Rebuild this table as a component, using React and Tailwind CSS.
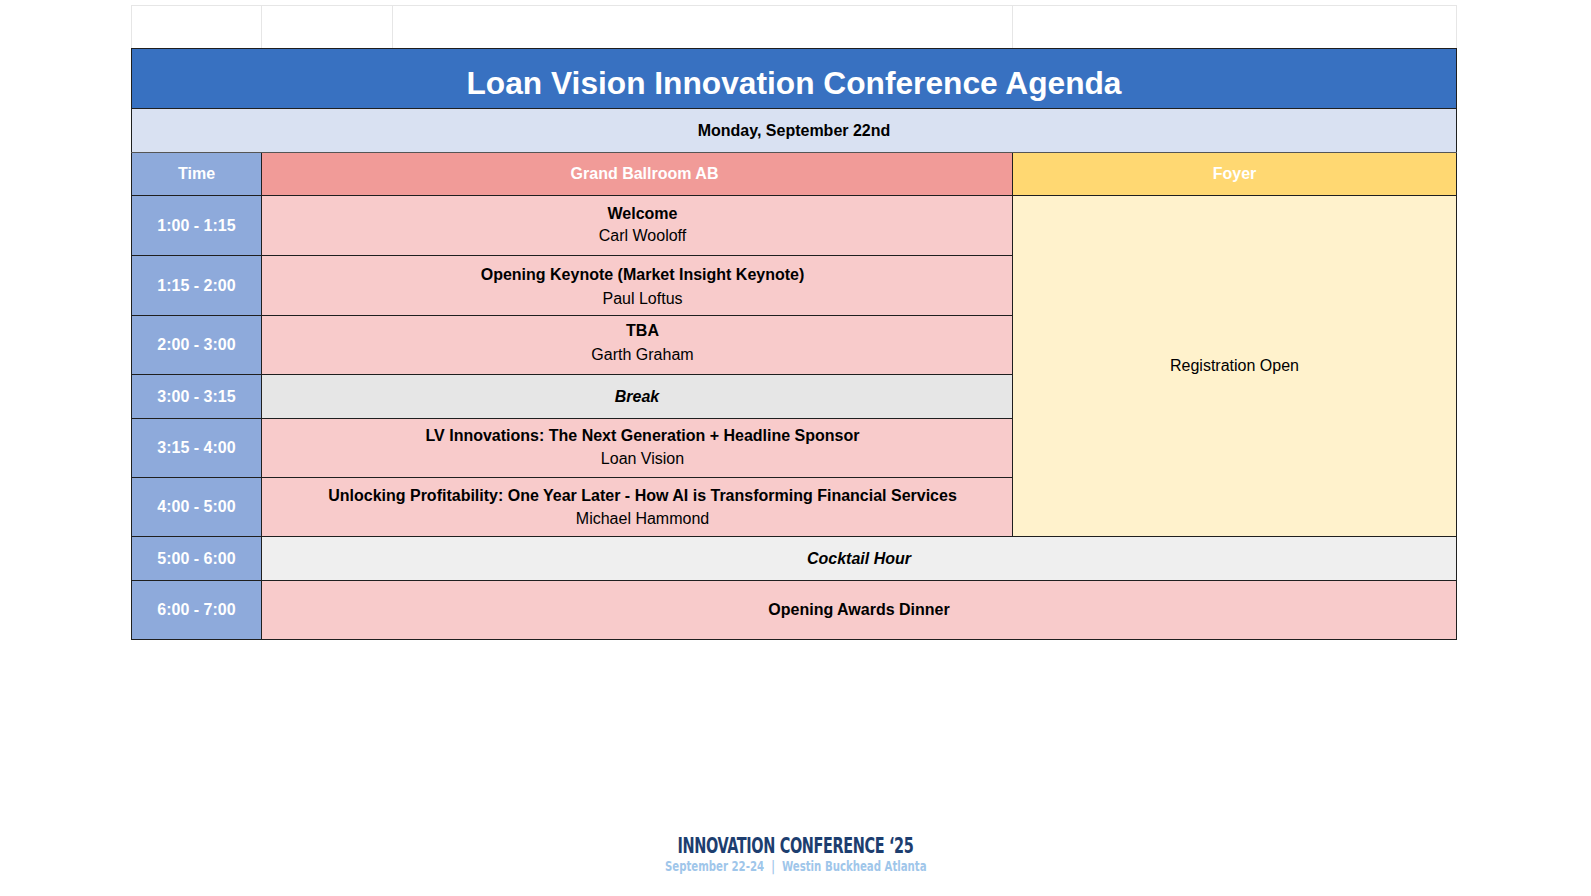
import React from "react";

const sessions = [
  { time: "1:00 - 1:15", title: "Welcome", speaker: "Carl Wooloff", h: "h-[60px]", lead: "leading-[22px] pb-[2px]" },
  {
    time: "1:15 - 2:00",
    title: "Opening Keynote (Market Insight Keynote)",
    speaker: "Paul Loftus",
    h: "h-[60px]",
    lead: "leading-[24px] pt-[3px]",
  },
  { time: "2:00 - 3:00", title: "TBA", speaker: "Garth Graham", h: "h-[59px]", lead: "leading-[24px] pb-[5px]" },
  { time: "3:00 - 3:15", title: "Break", brk: true, h: "h-[44px]" },
  {
    time: "3:15 - 4:00",
    title: "LV Innovations: The Next Generation + Headline Sponsor",
    speaker: "Loan Vision",
    h: "h-[59px]",
    lead: "leading-[23px] pb-[2px]",
  },
  {
    time: "4:00 - 5:00",
    title: "Unlocking Profitability: One Year Later - How AI is Transforming Financial Services",
    speaker: "Michael Hammond",
    h: "h-[59px]",
    lead: "leading-[23px]",
  },
];

const cellBorder = "border border-[#1f1f1f]";
const timeCell = `${cellBorder} bg-[#8eaadb] text-white font-bold text-[16px] text-center align-middle p-0`;

export default function App() {
  return (
    <div className="w-[1591px] h-[896px] bg-white font-['Liberation_Sans',Arial,sans-serif] text-black flex flex-col">
      <div className="pt-[5px] pl-[131px]">
        <table className="border-collapse table-fixed w-[1325px]">
          <colgroup>
            <col className="w-[130px]" />
            <col className="w-[131px]" />
            <col className="w-[620px]" />
            <col className="w-[444px]" />
          </colgroup>
          <tbody>
            {/* empty spreadsheet row */}
            <tr className="h-[43px]">
              <td className="border border-[#e6e6e6] border-b-[#1f1f1f] p-0" />
              <td className="border border-[#e6e6e6] border-b-[#1f1f1f] p-0" />
              <td className="border border-[#e6e6e6] border-b-[#1f1f1f] p-0" />
              <td className="border border-[#e6e6e6] border-b-[#1f1f1f] p-0" />
            </tr>

            <tr className="h-[60px]">
              <td
                colSpan={4}
                className={`${cellBorder} bg-[#3871c1] text-white font-bold text-[31.7px] text-center align-middle pt-[10px] pb-0 leading-none`}
              >
                Loan Vision Innovation Conference Agenda
              </td>
            </tr>

            <tr className="h-[44px]">
              <td
                colSpan={4}
                className={`${cellBorder} border-b-[#555] bg-[#d9e1f2] font-bold text-[16px] text-center align-middle p-0`}
              >
                Monday, September 22nd
              </td>
            </tr>

            <tr className="h-[43px]">
              <td className={timeCell}>Time</td>
              <td
                colSpan={2}
                className={`${cellBorder} bg-[#f19b98] text-white font-bold text-[16px] text-center align-middle py-0 pl-[15px] pr-0`}
              >
                Grand Ballroom AB
              </td>
              <td
                className={`${cellBorder} bg-[#ffd872] text-white font-bold text-[16px] text-center align-middle p-0`}
              >
                Foyer
              </td>
            </tr>

            {sessions.map((s, i) => (
              <tr key={s.time} className={s.h}>
                <td className={timeCell}>{s.time}</td>
                {s.brk ? (
                  <td
                    colSpan={2}
                    className={`${cellBorder} bg-[#e6e6e6] font-bold italic text-[16px] text-center align-middle p-0`}
                  >
                    {s.title}
                  </td>
                ) : (
                  <td
                    colSpan={2}
                    className={`${cellBorder} bg-[#f8cbcb] text-[16px] text-center align-middle pl-[11px] pr-0 ${s.lead}`}
                  >
                    <div className="font-bold">{s.title}</div>
                    <div>{s.speaker}</div>
                  </td>
                )}
                {i === 0 && (
                  <td
                    rowSpan={6}
                    className={`${cellBorder} bg-[#fff2cc] text-[16px] text-center align-middle p-0`}
                  >
                    Registration Open
                  </td>
                )}
              </tr>
            ))}

            <tr className="h-[44px]">
              <td className={timeCell}>5:00 - 6:00</td>
              <td
                colSpan={3}
                className={`${cellBorder} bg-[#efefef] font-bold italic text-[16px] text-center align-middle p-0`}
              >
                Cocktail Hour
              </td>
            </tr>

            <tr className="h-[59px]">
              <td className={timeCell}>6:00 - 7:00</td>
              <td
                colSpan={3}
                className={`${cellBorder} bg-[#f8cbcb] font-bold text-[16px] text-center align-middle p-0`}
              >
                Opening Awards Dinner
              </td>
            </tr>
          </tbody>
        </table>
      </div>

      {/* footer logo text */}
      <div className="mt-auto mb-[22px] flex flex-col items-center">
        <div className="font-['Liberation_Sans_Narrow','DejaVu_Sans_Condensed',sans-serif] font-bold text-[22px] leading-[24px] text-[#1d3e6f] tracking-[-0.5px] scale-x-[0.73] whitespace-nowrap">
          INNOVATION CONFERENCE ‘25
        </div>
        <div className="font-['Liberation_Sans_Narrow','DejaVu_Sans_Condensed',sans-serif] font-bold text-[14.5px] leading-[16px] text-[#9fc6ea] scale-x-[0.78] whitespace-nowrap">
          September 22-24 &nbsp;|&nbsp; Westin Buckhead Atlanta
        </div>
      </div>
    </div>
  );
}
